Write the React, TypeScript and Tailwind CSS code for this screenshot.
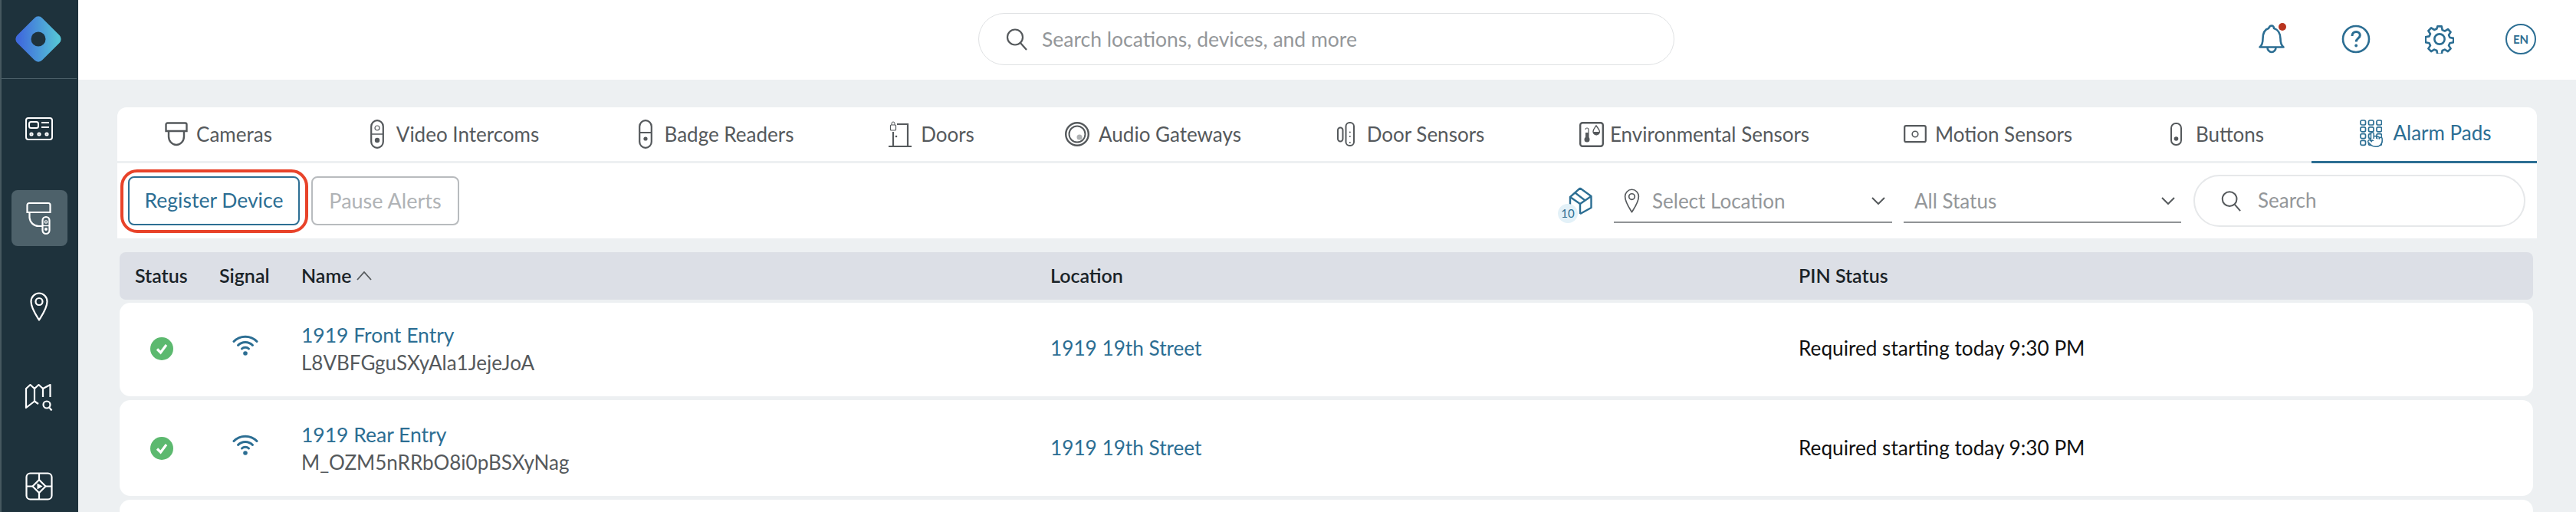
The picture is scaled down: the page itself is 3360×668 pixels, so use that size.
import React from 'react';
import { Pointer } from 'lucide-react';

const TEAL = '#2c6e93';

function Logo() {
  return (
    <svg width="64" height="64" viewBox="0 0 64 64">
      <defs>
        <linearGradient id="logoGrad" x1="0.9" y1="0.1" x2="0.1" y2="0.9">
          <stop offset="0" stopColor="#55c4d6" />
          <stop offset="1" stopColor="#3f69dc" />
        </linearGradient>
      </defs>
      <rect x="9" y="9" width="46" height="46" rx="7" fill="url(#logoGrad)" transform="rotate(45 32 32)" />
      <circle cx="32" cy="32" r="9.500" fill="#1e323c" />
    </svg>
  );
}

function NavPanelIcon() {
  return (
    <svg width="38" height="32" viewBox="0 0 38 32" fill="none" stroke="#fff" strokeWidth="2">
      <rect x="2" y="2" width="34" height="28" rx="3" />
      <rect x="6" y="7" width="12" height="8" rx="2.5" />
      <path d="M22 8h10M22 14h10" />
      <circle cx="9" cy="23" r="1.6" />
      <circle cx="19" cy="23" r="1.6" />
      <circle cx="29" cy="23" r="1.6" />
    </svg>
  );
}

function NavDeviceIcon() {
  return (
    <svg width="34" height="44" viewBox="0 0 34 44" fill="none" stroke="#fff" strokeWidth="2.2">
      <path d="M4 2h25a2.5 2.5 0 0 1 2.5 2.5V14H1.500V4.500A2.500 2.500 0 0 1 4 2z" />
      <path d="M4.500 14v7a12 12 0 0 0 12 11h6" />
      <rect x="21.500" y="20" width="9" height="22" rx="4.500" fill="#4d616a" />
      <circle cx="26" cy="26.500" r="1.700" strokeWidth="1.200" />
      <circle cx="26" cy="36" r="2" fill="#fff" stroke="none" />
      <path d="M21.500 31.500h9" strokeWidth="1.400" />
    </svg>
  );
}

function PinIcon({ color = '#fff', w = 24, h = 38, sw = 2.2 }: { color?: string; w?: number; h?: number; sw?: number }) {
  return (
    <svg width={w} height={h} viewBox="0 0 24 38" fill="none" stroke={color} strokeWidth={sw}>
      <path d="M12 36.500C8 30 1.500 21 1.500 12.500a10.500 11 0 0 1 21 0C22.500 21 16 30 12 36.500z" strokeLinejoin="round" />
      <circle cx="12" cy="12.500" r="4.500" />
    </svg>
  );
}

function NavMapIcon() {
  return (
    <svg width="38" height="36" viewBox="0 0 38 36" fill="none" stroke="#fff" strokeWidth="2.200">
      <path d="M18 26l-5 -3.500L2 31V6l5.500 -5L13 6l5.500 -5L24 6l9.500 -5v16" strokeLinejoin="round" />
      <path d="M13 6v17M24 6v11" />
      <circle cx="29" cy="27" r="4.500" />
      <path d="M32.500 31l3 3.500" />
    </svg>
  );
}

function NavVideoIcon() {
  return (
    <svg width="36" height="37" viewBox="0 0 36 37" fill="none" stroke="#fff" strokeWidth="2.200">
      <rect x="1.500" y="1.500" width="33" height="34" rx="5" />
      <path d="M18 1.500V10M18 27v8.500M1.500 18.500H9.500M26.500 18.500h8" />
      <path d="M18 10l8.500 8.500 -8.500 8.500 -8.500 -8.500z" />
      <path d="M15.500 14.500l7 4 -7 4z" fill="#fff" stroke="none" />
    </svg>
  );
}

function SideItem({ active, children }: { active?: boolean; children: React.ReactNode }) {
  return (
    <div className={`flex h-[73px] w-[73px] items-center justify-center rounded-lg ${active ? 'bg-[#4d616a]' : ''}`}>
      {children}
    </div>
  );
}

function Sidebar() {
  return (
    <aside className="flex h-full w-[102px] shrink-0 flex-col overflow-hidden border-l-2 border-[#46585f] bg-[#1e323c]">
      <div className="flex h-[103px] w-[98px] shrink-0 items-center justify-center border-b border-[#4b5f68] pr-[2px]">
        <Logo />
      </div>
      <div className="flex shrink-0 flex-col items-center pt-[28px] pr-[2px]">
        <SideItem><NavPanelIcon /></SideItem>
        <div className="mt-[44px]"><SideItem active><NavDeviceIcon /></SideItem></div>
        <div className="mt-[42px]"><SideItem><PinIcon /></SideItem></div>
        <div className="mt-[46px]"><SideItem><NavMapIcon /></SideItem></div>
        <div className="mt-[43px]"><SideItem><NavVideoIcon /></SideItem></div>
      </div>
    </aside>
  );
}

function SearchGlyph({ size = 30 }: { size?: number }) {
  return (
    <svg width={size} height={size} viewBox="0 0 30 30" fill="none" stroke="#55595c" strokeWidth="2.200">
      <circle cx="13" cy="12.500" r="10" />
      <path d="M20 20l8 9" />
    </svg>
  );
}

function BellIcon() {
  return (
    <svg width="36" height="38" viewBox="0 0 36 38" fill="none" stroke={TEAL} strokeWidth="2.600" strokeLinejoin="round">
      <path d="M2.500 29.500h31c-3 -2.500 -4 -6 -4 -11 0 -7 -3.500 -12 -8.500 -13.500C21 2.500 19.500 1.500 18 1.500S15 2.500 14 5C9 6.500 6.500 11.500 6.500 18.500c0 5 -1 8.500 -4 11z" />
      <path d="M12.500 30a5.500 6 0 0 0 11 0" />
    </svg>
  );
}

function HelpIcon() {
  return (
    <svg width="38" height="38" viewBox="0 0 38 38" fill="none" stroke={TEAL} strokeWidth="2.600">
      <circle cx="19" cy="19" r="17" />
      <path d="M14 15c0 -3.500 2.300 -5.500 5.300 -5.500 3 0 5 2 5 4.500 0 4 -5 4 -5 8.500" strokeWidth="3" />
      <circle cx="19.200" cy="27.500" r="1.900" fill={TEAL} stroke="none" />
    </svg>
  );
}

function GearIcon() {
  return (
    <svg width="38" height="38" viewBox="0 0 24 24" fill="none" stroke={TEAL} strokeWidth="1.650" strokeLinejoin="round">
      <path d="M10.300 1.500h3.400l.6 3 2 .9 2.600 -1.600 2.300 2.400 -1.600 2.500.9 2 3 .6v3.400l-3 .6 -.9 2 1.600 2.500 -2.300 2.400 -2.600 -1.600 -2 .9 -.6 3h-3.400l-.6 -3 -2 -.9 -2.600 1.600 -2.300 -2.400 1.600 -2.500 -.9 -2 -3 -.6V10.300l3 -.6.900 -2 -1.600 -2.500 2.300 -2.400 2.600 1.600 2 -.9z" />
      <circle cx="12" cy="12" r="4.200" />
    </svg>
  );
}

function TopBar() {
  return (
    <header className="flex h-[104px] shrink-0 items-start bg-white">
      <div className="ml-[1174px] mt-[17px] flex h-[68px] w-[908px] items-center rounded-full border border-[#e0e2e4] pl-[34px]">
        <SearchGlyph />
        <span className="ml-[18px] text-[26.500px] leading-none text-[#94979a]">Search locations, devices, and more</span>
      </div>
      <div className="relative ml-[761px] mt-[31px] flex h-[40px] items-center">
        <div className="relative flex w-[36px] justify-center">
          <BellIcon />
          <span className="absolute -top-[2px] left-[27px] h-[10px] w-[10px] rounded-full bg-[#b9341f]" />
        </div>
        <div className="ml-[73px]"><HelpIcon /></div>
        <div className="ml-[71px]"><GearIcon /></div>
        <div className="ml-[67px] flex h-[40px] w-[40px] items-center justify-center rounded-full border-[2px] border-[#2c6e93] text-[15px] font-bold text-[#2c6e93]">EN</div>
      </div>
    </header>
  );
}

/* tab icons */
function CameraTabIcon() {
  return (
    <svg width="30" height="32" viewBox="0 0 30 32" fill="none" stroke="#55595c" strokeWidth="2.400">
      <path d="M3.500 1.500h23a2 2 0 0 1 2 2V12h-27V3.500a2 2 0 0 1 2 -2z" />
      <path d="M5 12v7a10 11 0 0 0 20 0v-7" />
    </svg>
  );
}
function IntercomTabIcon() {
  return (
    <svg width="18" height="38" viewBox="0 0 18 38" fill="none" stroke="#55595c" strokeWidth="2.200">
      <rect x="1.200" y="1.200" width="15.600" height="35.600" rx="7.800" />
      <circle cx="9" cy="11" r="3" strokeWidth="1.200" />
      <path d="M1.200 19h15.600" strokeWidth="1.500" />
      <circle cx="9" cy="27" r="3.200" fill="#55595c" stroke="none" />
    </svg>
  );
}
function BadgeTabIcon() {
  return (
    <svg width="18" height="38" viewBox="0 0 18 38" fill="none" stroke="#55595c" strokeWidth="2.200">
      <rect x="1.200" y="1.200" width="15.600" height="35.600" rx="7.800" />
      <path d="M1.200 17h15.600" strokeWidth="2" />
      <circle cx="9" cy="25" r="2.600" fill="#55595c" stroke="none" />
    </svg>
  );
}
function DoorTabIcon() {
  return (
    <svg width="30" height="34" viewBox="0 0 30 34" fill="none" stroke="#55595c" strokeWidth="2.200">
      <path d="M11 4h14v28M6 14v18M0 33h30" />
      <rect x="2.500" y="5" width="7" height="7" rx="1" strokeWidth="1.200" />
      <path d="M4 5V3a2 2 0 0 1 4 0v2" strokeWidth="1" />
      <circle cx="10" cy="20" r="1.300" fill="#55595c" stroke="none" />
    </svg>
  );
}
function AudioTabIcon() {
  return (
    <svg width="32" height="32" viewBox="0 0 32 32" fill="none" stroke="#55595c">
      <circle cx="16" cy="16" r="14.800" strokeWidth="2.400" />
      <circle cx="16" cy="16" r="10.500" strokeWidth="2" />
      <circle cx="19" cy="20" r="3.500" fill="#aeb1b3" stroke="none" />
    </svg>
  );
}
function DoorSensorTabIcon() {
  return (
    <svg width="23" height="32" viewBox="0 0 23 32" fill="none" stroke="#55595c" strokeWidth="2">
      <rect x="1" y="7.500" width="6.500" height="18" rx="3.200" />
      <rect x="11.500" y="1" width="10.500" height="30" rx="4.800" />
      <circle cx="16.800" cy="13.500" r="1" fill="#55595c" stroke="none" />
      <circle cx="16.800" cy="19" r="1" fill="#55595c" stroke="none" />
      <circle cx="16.800" cy="27" r="1" fill="#55595c" stroke="none" />
    </svg>
  );
}
function EnvTabIcon() {
  return (
    <svg width="32" height="33" viewBox="0 0 32 33" fill="none" stroke="#55595c" strokeWidth="2.400">
      <rect x="1.200" y="1.200" width="29.600" height="30.600" rx="3" />
      <path d="M10 10a2 2 0 0 1 4 0v12" strokeWidth="1.200" transform="translate(-2 0)" />
      <circle cx="10" cy="23" r="3.500" fill="#55595c" stroke="none" />
      <rect x="8" y="14" width="4" height="9" fill="#55595c" stroke="none" />
      <path d="M22 5c-2 3 -4 5 -4 7.500a4.200 4.200 0 0 0 8.400 0C26.400 10 24 8 22 5z" strokeWidth="1.400" />
      <path d="M18 13h8.400a4.200 4.200 0 0 1 -8.400 0z" fill="#55595c" stroke="none" />
    </svg>
  );
}
function MotionTabIcon() {
  return (
    <svg width="30" height="24" viewBox="0 0 30 24" fill="none" stroke="#55595c" strokeWidth="2.200">
      <rect x="1.200" y="1.200" width="27.600" height="21" rx="2" />
      <circle cx="15" cy="12" r="3.800" strokeWidth="1.600" />
    </svg>
  );
}
function ButtonTabIcon() {
  return (
    <svg width="15" height="30" viewBox="0 0 15 30" fill="none" stroke="#55595c" strokeWidth="2">
      <rect x="1" y="1" width="13" height="28" rx="6" />
      <circle cx="7.500" cy="21" r="2.800" fill="#55595c" stroke="none" />
    </svg>
  );
}
function AlarmTabIcon() {
  const cells = [];
  for (let r = 0; r < 4; r++) {
    for (let c = 0; c < 3; c++) {
      cells.push(<rect key={`${r}-${c}`} x={1 + c * 10.500} y={1 + r * 8.800} width="6.500" height="6" rx="1.800" />);
    }
  }
  return (
    <svg width="29" height="36" viewBox="0 0 29 36" fill="none" stroke={TEAL} strokeWidth="1.700">
      {cells}
    </svg>
  );
}

const tabs = [
  { label: 'Cameras', width: 'w-[264px]', gap: 'gap-[11px]', icon: <CameraTabIcon /> },
  { label: 'Video Intercoms', width: 'w-[352px]', gap: 'gap-[16px]', icon: <IntercomTabIcon /> },
  { label: 'Badge Readers', width: 'w-[330px]', gap: 'gap-[16px]', icon: <BadgeTabIcon /> },
  { label: 'Doors', width: 'w-[232px]', gap: 'gap-[12px]', icon: <DoorTabIcon /> },
  { label: 'Audio Gateways', width: 'w-[346px]', gap: 'gap-[12px]', icon: <AudioTabIcon /> },
  { label: 'Door Sensors', width: 'w-[326px]', gap: 'gap-[16px]', icon: <DoorSensorTabIcon /> },
  { label: 'Environmental Sensors', width: 'w-[414px]', gap: 'gap-[8px]', icon: <EnvTabIcon /> },
  { label: 'Motion Sensors', width: 'w-[352px]', gap: 'gap-[11px]', icon: <MotionTabIcon /> },
  { label: 'Buttons', width: 'w-[246px]', gap: 'gap-[18px]', icon: <ButtonTabIcon /> },
];

function Tabs() {
  return (
    <div className="flex h-[73px] shrink-0 border-b-[3px] border-[#edf0f2]">
      {tabs.map((t) => (
        <div key={t.label} className={`flex h-[70px] items-center justify-center text-[26px] text-[#55595c] ${t.width} ${t.gap}`}>
          {t.icon}
          <span className="whitespace-nowrap">{t.label}</span>
        </div>
      ))}
      <div className="relative flex h-[73px] w-[294px] items-center justify-center gap-[14px] border-b-[3px] border-[#2c6e93] pb-[3px] pl-[4px] text-[26px] text-[#2c6e93]">
        <AlarmTabIcon />
        <span className="whitespace-nowrap">Alarm Pads</span>
        <Pointer size={22} fill="#fff" strokeWidth={1.600} className="absolute left-[72px] top-[31px]" />
      </div>
    </div>
  );
}

function BoxCountIcon() {
  return (
    <div className="relative h-[36px] w-[32px]">
      <svg width="32" height="36" viewBox="0 0 32 36" fill="none" stroke={TEAL} strokeWidth="2.400" strokeLinejoin="round">
        <path d="M16 1.500L30.500 12v15L16 35M16 1.500L3 13v13M3 13l13 9 14.500 -10M16 22v13" />
        <path d="M9.500 7.500l13 10" />
      </svg>
      <span className="absolute -left-[13px] top-[22px] flex h-[25px] w-[26px] items-center justify-center rounded-full bg-[#e3f1f8] text-[15px] text-[#2c6e93]">10</span>
    </div>
  );
}

function Chevron() {
  return (
    <svg width="18" height="10" viewBox="0 0 18 10" fill="none" stroke="#55595c" strokeWidth="2">
      <path d="M1 1l8 8 8 -8" />
    </svg>
  );
}

function Toolbar() {
  return (
    <div className="flex h-[98px] items-center bg-white pl-[14px] pr-[15px]">
      <button className="relative h-[64px] w-[224px] rounded-lg border-2 border-[#2c6e93] text-[26.500px] text-[#2c6e93]">
        Register Device
        <span className="absolute -left-[12px] -right-[13px] -top-[11px] -bottom-[12px] rounded-[22px] border-[4px] border-[#e8432a]" />
      </button>
      <button className="ml-[15px] h-[64px] w-[193px] rounded-lg border-2 border-[#b8bbbe] text-[27px] text-[#b0b3b6]">Pause Alerts</button>
      <div className="ml-auto"><BoxCountIcon /></div>
      <div className="ml-[28px] mt-[6px] flex h-[52px] w-[363px] items-center border-b-2 border-[#909396] pb-[4px] pl-[12px] pr-[9px]">
        <PinIcon color="#55595c" w={23} h={32} sw={2} />
        <span className="ml-[15px] text-[26px] text-[#94979a]">Select Location</span>
        <span className="ml-auto"><Chevron /></span>
      </div>
      <div className="ml-[15px] mt-[6px] flex h-[52px] w-[362px] items-center border-b-2 border-[#909396] pb-[4px] pl-[14px] pr-[8px]">
        <span className="text-[26px] text-[#94979a]">All Status</span>
        <span className="ml-auto"><Chevron /></span>
      </div>
      <div className="ml-[16px] flex h-[68px] w-[433px] items-center rounded-full border-2 border-[#e6e8ea] pl-[33px]">
        <SearchGlyph size={28} />
        <span className="ml-[21px] pb-[2px] text-[26px] text-[#94979a]">Search</span>
      </div>
    </div>
  );
}

function SignalIcon() {
  return (
    <svg width="34" height="28" viewBox="0 0 34 28" fill="none" stroke={TEAL} strokeWidth="3" strokeLinecap="round">
      <path d="M2 9.500C10 1 24 1 32 9.500" />
      <path d="M7.500 14.500C12.500 9 21.500 9 26.500 14.500" />
      <path d="M12.500 19C15 16.500 19 16.500 21.500 19" />
      <ellipse cx="17" cy="25" rx="2.800" ry="2.800" fill={TEAL} stroke="none" />
    </svg>
  );
}

function StatusOk() {
  return (
    <div className="flex h-[30px] w-[30px] items-center justify-center rounded-full bg-[#5cb96f]">
      <svg width="18" height="16" viewBox="0 0 18 16" fill="none" stroke="#fff" strokeWidth="3.200">
        <path d="M3 8.500l4.500 4.500L15 3" />
      </svg>
    </div>
  );
}

const rows = [
  { name: '1919 Front Entry', id: 'L8VBFGguSXyAla1JejeJoA', h: 'h-[122px] pb-[2px]' },
  { name: '1919 Rear Entry', id: 'M_OZM5nRRbO8i0pBSXyNag', h: 'h-[125px]' },
];

function Row({ name, id, h }: { name: string; id: string; h: string }) {
  return (
    <div className={`flex items-center rounded-[14px] bg-white ${h}`}>
      <div className="flex w-[110px] justify-center"><StatusOk /></div>
      <div className="mb-[10px] flex w-[127px] justify-center pr-[19px]"><SignalIcon /></div>
      <div className="w-[977px]">
        <div className="text-[26.500px] leading-[36px] text-[#2c6e93]">{name}</div>
        <div className="text-[26px] leading-[36px] text-[#55595c]">{id}</div>
      </div>
      <div className="w-[976px] text-[26.200px] text-[#2c6e93]">1919 19th Street</div>
      <div className="text-[26.200px] text-[#111]">Required starting today 9:30 PM</div>
    </div>
  );
}

function Table() {
  return (
    <div className="ml-[3px] mr-[5px] mt-[18px]">
      <div className="flex h-[62px] items-center rounded-lg bg-[#dcdfe6] text-[25px] font-semibold text-[#1a2328]">
        <div className="w-[130px] pl-[20px]">Status</div>
        <div className="w-[107px]">Signal</div>
        <div className="flex w-[977px] items-center gap-[7px]">
          Name
          <svg width="20" height="12" viewBox="0 0 20 12" fill="none" stroke="#55595c" strokeWidth="1.800"><path d="M1 11l9 -10 9 10" /></svg>
        </div>
        <div className="w-[976px]">Location</div>
        <div>PIN Status</div>
      </div>
      <div className="mt-[4px] flex flex-col gap-[5px]">
        {rows.map((r) => <Row key={r.id} {...r} />)}
        <div className="h-[100px] rounded-[14px] bg-white" />
      </div>
    </div>
  );
}

export default function App() {
  return (
    <div className="flex h-[668px] w-[3360px] overflow-hidden bg-[#edf0f2] font-['Lato',sans-serif]">
      <Sidebar />
      <main className="flex min-w-0 flex-1 flex-col">
        <TopBar />
        <div className="pl-[51px] pr-[51px] pt-[36px]">
          <div className="flex h-[171px] flex-col rounded-xl bg-white">
            <Tabs />
            <Toolbar />
          </div>
          <Table />
        </div>
      </main>
    </div>
  );
}
